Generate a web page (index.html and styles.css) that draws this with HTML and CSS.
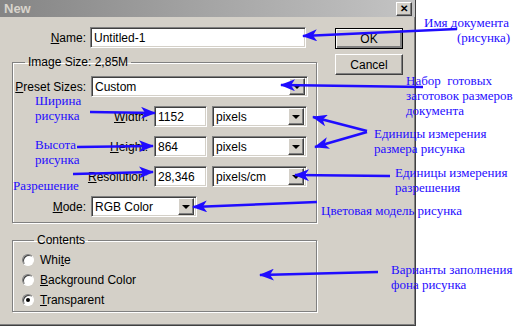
FILE: index.html
```html
<!DOCTYPE html>
<html lang="ru">
<head>
  <meta charset="UTF-8" />
  <title>New</title>
  <link rel="stylesheet" href="styles.css">
</head>
<body>

  <div class="page">

    <div class="dialog">

      <div class="titlebar">
        <span class="title">New</span>
        <span class="close">&#x2715;</span>
      </div>

      <div class="dialog-body">

        <div class="main">

          <div class="row name-row">
            <span class="label"><u>N</u>ame:</span>
            <div class="field name-field">Untitled-1</div>
          </div>

          <fieldset class="group size-group">
            <legend>Image Size: 2,85M</legend>

            <div class="row">
              <span class="label"><u>P</u>reset Sizes:</span>
              <div class="field combo preset"><span>Custom</span><span class="drop"></span></div>
            </div>

            <div class="row">
              <span class="label label-wide"><u>W</u>idth:</span>
              <div class="field number">1152</div>
              <div class="field combo unit"><span>pixels</span><span class="drop"></span></div>
            </div>

            <div class="row">
              <span class="label label-wide"><u>H</u>eight:</span>
              <div class="field number">864</div>
              <div class="field combo unit"><span>pixels</span><span class="drop"></span></div>
            </div>

            <div class="row">
              <span class="label label-wide"><u>R</u>esolution:</span>
              <div class="field number">28,346</div>
              <div class="field combo unit"><span>pixels/cm</span><span class="drop"></span></div>
            </div>

            <div class="row">
              <span class="label"><u>M</u>ode:</span>
              <div class="field combo mode"><span>RGB Color</span><span class="drop"></span></div>
            </div>
          </fieldset>

          <fieldset class="group contents-group">
            <legend>Contents</legend>
            <div class="radio"><span class="dot"></span><span>Whi<u>t</u>e</span></div>
            <div class="radio"><span class="dot"></span><span><u>B</u>ackground Color</span></div>
            <div class="radio"><span class="dot checked"></span><span><u>T</u>ransparent</span></div>
          </fieldset>

        </div>

        <div class="buttons">
          <div class="btn btn-default">OK</div>
          <div class="btn">Cancel</div>
        </div>

      </div>

    </div>

    <!-- annotations drawn over the screenshot -->
    <svg class="arrows" width="520" height="328" viewBox="0 0 520 328">
      <defs>
        <marker id="head" markerUnits="userSpaceOnUse" markerWidth="16" markerHeight="12" refX="14" refY="6" orient="auto">
          <path d="M0,0 L15,6 L0,12 L4,6 z" fill="#1f0cff" />
        </marker>
      </defs>
      <g stroke="#1f0cff" stroke-width="2.5" fill="none" marker-end="url(#head)">
        <line x1="457" y1="29" x2="303" y2="36" />
        <line x1="423" y1="87" x2="281" y2="85" />
        <line x1="90" y1="112" x2="155" y2="113" />
        <line x1="77" y1="147" x2="153" y2="146" />
        <line x1="73" y1="174" x2="153" y2="172" />
        <line x1="367" y1="131" x2="313" y2="117" />
        <line x1="367" y1="132" x2="315" y2="147" />
        <line x1="390" y1="176" x2="295" y2="175" />
        <line x1="317" y1="202" x2="193" y2="207" />
        <line x1="378" y1="272" x2="260" y2="275" />
      </g>
    </svg>

    <div class="note note-name">Имя документа<span class="indent">(рисунка)</span></div>
    <div class="note note-preset">Набор  готовых<br>заготовок размеров<br>документа</div>
    <div class="note note-width">Ширина<br>рисунка</div>
    <div class="note note-height">Высота<br>рисунка</div>
    <div class="note note-res">Разрешение</div>
    <div class="note note-units">Единицы измерения<br>размера рисунка</div>
    <div class="note note-resunits">Единицы измерения<br>разрешения</div>
    <div class="note note-mode">Цветовая модель рисунка</div>
    <div class="note note-fill">Варианты заполнения<br>фона рисунка</div>

  </div>

</body>
</html>
```

FILE: styles.css
```css
* {
  box-sizing: border-box;
}

html, body {
  margin: 0;
  padding: 0;
  background-color: #fff;
}

.page {
  position: relative;
  width: 520px;
  height: 328px;
  overflow: hidden;
  font-family: 'Liberation Sans', Arial, sans-serif;
  font-size: 12px;
  color: #000;
}

.dialog {
  width: 416px;
  height: 326px;
  background-color: #d4d0c8;
  border-right: 1px solid #404040;
  border-bottom: 1px solid #404040;
  box-shadow: inset -1px -1px 0 #808080;
}

.titlebar {
  height: 17px;
  display: flex;
  align-items: center;
  justify-content: space-between;
  padding: 0 3px 0 4px;
  background: linear-gradient(to right, #858585, #c4c4c4);
}

.title {
  font-size: 13px;
  font-weight: bold;
  color: #d8d4cc;
}

.close {
  width: 16px;
  height: 14px;
  display: flex;
  align-items: center;
  justify-content: center;
  font-size: 10px;
  font-weight: bold;
  background-color: #d4d0c8;
  border: 1px solid;
  border-color: #fff #404040 #404040 #fff;
  box-shadow: inset -1px -1px 0 #808080;
}

.dialog-body {
  display: flex;
  gap: 18px;
  padding: 10px 0 0 12px;
}

.main {
  width: 305px;
  display: flex;
  flex-direction: column;
}

.row {
  display: flex;
  align-items: center;
  gap: 5px;
}

.label {
  width: 73px;
  text-align: right;
  flex-shrink: 0;
}

.name-row .label {
  width: 74px;
}

.label-wide {
  width: 135px;
  margin-right: 1px;
}

.field {
  height: 21px;
  display: flex;
  align-items: center;
  padding-left: 3px;
  background-color: #fff;
  border: 1px solid;
  border-color: #808080 #fff #fff #808080;
  box-shadow: inset 1px 1px 0 #404040, inset -1px -1px 0 #d4d0c8;
  white-space: nowrap;
}

.name-field {
  width: 216px;
  margin-left: -1px;
}

.combo {
  justify-content: space-between;
  padding-right: 2px;
}

.preset {
  width: 217px;
}

.number {
  width: 53px;
}

.unit {
  width: 95px;
}

.mode {
  width: 106px;
}

.drop {
  width: 16px;
  height: 17px;
  display: flex;
  align-items: center;
  justify-content: center;
  background-color: #d4d0c8;
  border: 1px solid;
  border-color: #fff #404040 #404040 #fff;
  box-shadow: inset -1px -1px 0 #808080;
}

.drop::after {
  content: "";
  border-left: 4px solid transparent;
  border-right: 4px solid transparent;
  border-top: 4px solid #000;
}

.group {
  margin: 0;
  border: 1px solid #808080;
  box-shadow: 1px 1px 0 #fff, inset 1px 1px 0 #fff;
}

.group legend {
  margin-left: 12px;
  padding: 0 3px;
  line-height: 14px;
}

.size-group {
  margin-top: 7px;
  padding: 7px 0 5px 0;
  display: flex;
  flex-direction: column;
  gap: 9px;
}

.contents-group {
  margin-top: 10px;
  padding: 3px 0 3px 9px;
  height: 79px;
}

.radio {
  height: 20px;
  display: flex;
  align-items: center;
  gap: 6px;
}

.dot {
  width: 12px;
  height: 12px;
  border-radius: 50%;
  background-color: #fff;
  border: 1px solid;
  border-color: #808080 #fff #fff #808080;
  box-shadow: inset 1px 1px 0 #404040;
  display: flex;
  align-items: center;
  justify-content: center;
}

.dot.checked::after {
  content: "";
  width: 4px;
  height: 4px;
  border-radius: 50%;
  background-color: #000;
}

.buttons {
  display: flex;
  flex-direction: column;
  gap: 5px;
  padding-top: 1px;
}

.btn {
  width: 68px;
  height: 21px;
  display: flex;
  align-items: center;
  justify-content: center;
  border: 1px solid;
  border-color: #fff #404040 #404040 #fff;
  box-shadow: inset -1px -1px 0 #808080;
}

.btn-default {
  border: 1px solid #000;
  box-shadow: inset 1px 1px 0 #fff, inset -2px -2px 0 #808080;
}

/* blue annotations */

.arrows {
  position: absolute;
  left: 0;
  top: 0;
}

.note {
  position: absolute;
  font-family: 'Liberation Serif', 'Times New Roman', serif;
  font-size: 13px;
  line-height: 15px;
  color: #1f0cff;
  white-space: pre;
}

.indent {
  display: block;
  padding-left: 33px;
}

.note-name {
  left: 424px;
  top: 15px;
}

.note-preset {
  left: 406px;
  top: 73px;
}

.note-width {
  left: 35px;
  top: 93px;
}

.note-height {
  left: 35px;
  top: 137px;
}

.note-res {
  left: 13px;
  top: 178px;
}

.note-units {
  left: 374px;
  top: 126px;
}

.note-resunits {
  left: 395px;
  top: 165px;
}

.note-mode {
  left: 321px;
  top: 203px;
}

.note-fill {
  left: 391px;
  top: 262px;
}
```
